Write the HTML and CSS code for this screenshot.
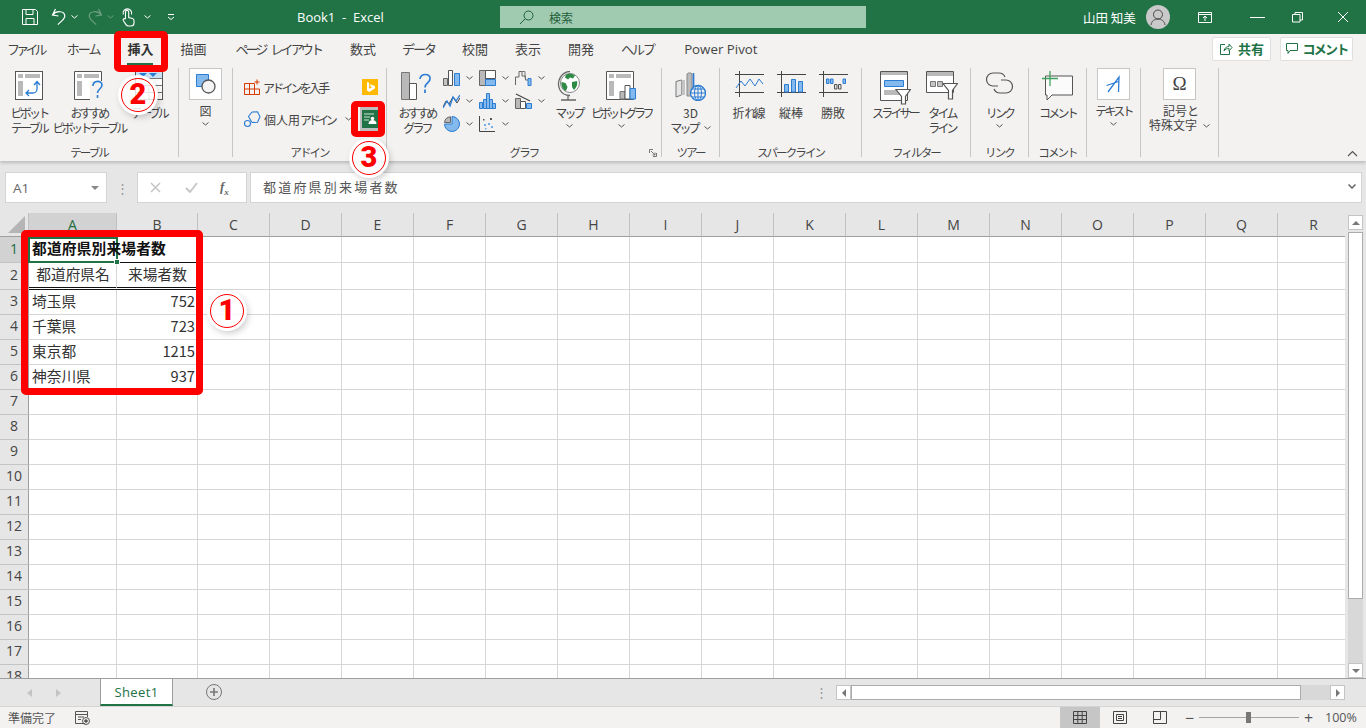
FILE: index.html
```html
<!DOCTYPE html>
<html lang="ja">
<head>
    <meta charset="UTF-8">
    <title>Book1 - Excel</title>
    <link rel="stylesheet" href="styles.css">
</head>
<body>

<!-- title bar -->
<header class="titlebar">
    <div class="qat">
        <svg class="q-save" width="18" height="18" viewBox="0 0 18 18" fill="none" stroke="#fff"><path d="M1.5 1.5h13l2 2v13h-15zM5 1.5v5h7v-5M5 16.5v-6h8v6"/></svg>
        <svg class="q-undo" width="15" height="18" viewBox="0 0 15 18" fill="none" stroke="#fff" stroke-width="1.2"><path d="M4.500 1 1.500 7l6 1M1.800 6.800C5 2.500 13.500 2.500 13.800 8c0 3-3.500 5.500-7 8.500"/></svg>
        <svg class="q-chev" width="7" height="4" viewBox="0 0 7 4" fill="none" stroke="#fff"><path d="m.5.500 3 2.500 3-2.500"/></svg>
        <svg class="q-redo" width="15" height="18" viewBox="0 0 15 18" fill="none" stroke="#6d9f81" stroke-width="1.2"><path d="m10.500 1 3 6-6 1M13.200 6.800C10 2.500 1.500 2.500 1.200 8c0 3 3.500 5.500 7 8.500"/></svg>
        <svg class="q-chev2" width="7" height="4" viewBox="0 0 7 4" fill="none" stroke="#6d9f81"><path d="m.5.500 3 2.500 3-2.500"/></svg>
        <svg class="q-touch" width="14" height="19" viewBox="0 0 14 19" fill="none" stroke="#fff" stroke-width="1.100"><path d="M4.500 11V4a1.600 1.600 0 0 1 3.200 0v5.500l3.800 1a2 2 0 0 1 1.500 2V15a3 3 0 0 1-3 3H7.500a3 3 0 0 1-2.500-1.400L2.300 12.500a1.200 1.200 0 0 1 2.200-1.200M2.300 6.500a4.300 4.300 0 1 1 8.200 0"/></svg>
        <svg class="q-chev3" width="7" height="4" viewBox="0 0 7 4" fill="none" stroke="#fff"><path d="m.5.500 3 2.500 3-2.500"/></svg>
        <svg class="q-more" width="8" height="7" viewBox="0 0 8 7" fill="none" stroke="#fff"><path d="M1 .5h6M1 3l3 2.500L7 3"/></svg>
    </div>
    <div class="doc-title">Book1&nbsp; -&nbsp; Excel</div>
    <div class="search">
        <svg width="15" height="15" viewBox="0 0 15 15" fill="none" stroke="#1e5e3a"><circle cx="9.500" cy="5.500" r="4.500"/><path d="M6.200 8.800 1 14"/></svg>
        <span>検索</span>
    </div>
    <div class="user">山田 知美</div>
    <div class="avatar">
        <svg width="24" height="24" viewBox="0 0 24 24" fill="none" stroke="#4a4a4a"><circle cx="12" cy="9.500" r="4.500"/><path d="M5 20c.5-4 3.500-6 7-6s6.500 2 7 6"/></svg>
    </div>
    <div class="win-btns">
        <svg class="w-display" width="14" height="12" viewBox="0 0 14 12" fill="none" stroke="#fff"><path d="M.5 1.500h13v10H.5zM.5 3.500h13M7 10V5.500M5 7l2-2 2 2"/></svg>
        <svg class="w-min" width="15" height="12" viewBox="0 0 15 12" fill="none" stroke="#fff"><path d="M0 6.500h15"/></svg>
        <svg class="w-restore" width="11" height="12" viewBox="0 0 11 12" fill="none" stroke="#fff"><path d="M.5 3.500h7.500v7.500H.5zM3 3.500V1.500h7.500V9H8"/></svg>
        <svg class="w-close" width="12" height="12" viewBox="0 0 12 12" fill="none" stroke="#fff"><path d="m1 1 10 10M11 1 1 11"/></svg>
    </div>
</header>

<!-- ribbon tabs -->
<nav class="tabs">
    <span class="tab t-file">ファイル</span>
    <span class="tab t-home">ホーム</span>
    <span class="tab active">挿入</span>
    <span class="tab">描画</span>
    <span class="tab t-page">ページ レイアウト</span>
    <span class="tab t-formula">数式</span>
    <span class="tab t-data">データ</span>
    <span class="tab">校閲</span>
    <span class="tab">表示</span>
    <span class="tab">開発</span>
    <span class="tab t-help">ヘルプ</span>
    <span class="tab t-power">Power Pivot</span>
    <div class="share">
        <button class="sbtn btn-share">
            <svg width="14" height="14" viewBox="0 0 14 14" fill="none" stroke="#217346"><path d="M6 2.500H1.500v10h9V9M5 9c.5-3 2.500-4.500 5-4.500V2l3 3.500L10 9V6.500C8 6.500 6 7 5 9z"/></svg>
            共有
        </button>
        <button class="sbtn btn-comment">
            <svg width="12" height="13" viewBox="0 0 12 13" fill="none" stroke="#217346"><path d="M.5 1.500h11v7H4l-2 3v-3H.5z"/></svg>
            <span class="k2">コメント</span>
        </button>
    </div>
</nav>

<!-- ribbon -->
<section class="ribbon">
    <div class="grp g-table">
        <div class="body">
            <div class="big w58">
                <div class="ico">
                    <svg width="28" height="29" viewBox="0 0 28 29" fill="none"><rect x=".5" y=".5" width="27" height="28" fill="#fff" stroke="#555"/><path fill="#b9b9b9" d="M3 3h5v4H3zM10 3h15v4H10zM3 10h5v15H3z"/><path stroke="#2b7cd3" stroke-width="1.300" d="M11 22h7a4 4 0 0 0 4-4v-7M19 14l3-3.500 3 3.500M14 19l-3 3 3 3"/></svg>
                </div>
                <div class="lbl k">ピボット</div>
                <div class="lbl k">テーブル</div>
            </div>
            <div class="big w62">
                <div class="ico">
                    <svg width="31" height="30" viewBox="0 0 31 30" fill="none"><path fill="#fff" stroke="#555" d="M.5.5h27v28H.5z"/><path fill="#b9b9b9" d="M3 3h5v4H3zM10 3h15v4H10zM3 10h5v15H3z"/><path fill="#f3f2f1" d="M16 10h15v20H16z"/><path stroke="#2b7cd3" stroke-width="1.600" d="M19 15c0-6 9-6 9-1 0 4-4.500 4-4.500 8M23.500 24v3"/></svg>
                </div>
                <div class="lbl k">おすすめ</div>
                <div class="lbl k">ピボットテーブル</div>
            </div>
            <div class="big w58">
                <div class="ico">
                    <svg width="28" height="29" viewBox="0 0 28 29" fill="none"><rect x=".5" y=".5" width="27" height="28" fill="#fff" stroke="#555"/><path fill="#c9e1f5" d="M1 1h26v6H1z"/><path fill="#2b7cd3" d="m4 2 4 4 4-4zM14 2l4 4 4-4z"/><path stroke="#777" d="M1 7.500h26M1 14.500h26M1 21.500h26M14 7v21"/></svg>
                </div>
                <div class="lbl k">テーブル</div>
            </div>
        </div>
        <div class="glabel k">テーブル</div>
    </div>

    <div class="grp g-fig">
        <div class="body">
            <div class="big wfull boxed">
                <div class="box">
                    <svg width="22" height="22" viewBox="0 0 22 22" fill="none"><path fill="#83b9ec" stroke="#2b7cd3" d="M1.500 1.500h12v12h-12z"/><circle cx="13.500" cy="13.500" r="6.500" fill="#f4f4f4" stroke="#555" stroke-width="1.300"/></svg>
                </div>
                <div class="lbl">図</div>
                <svg class="chev" width="7" height="4" viewBox="0 0 7 4"><path fill="none" stroke="#555" d="m.5.500 3 2.500 3-2.500"/></svg>
            </div>
        </div>
        <div class="glabel"></div>
    </div>

    <div class="grp g-addin">
        <div class="body">
            <div class="addin-rows">
                <div class="addin-row">
                    <svg width="16" height="16" viewBox="0 0 16 16" fill="none" stroke="#d83b01"><path d="M.5 4.500h10v11H.5zM.5 10h10M5.500 4.500v11M10.500 10h5v5.500h-5M13 .5v5M10.500 3h5"/></svg>
                    <span class="lbl k">アドインを入手</span>
                </div>
                <div class="addin-row">
                    <svg width="17" height="17" viewBox="0 0 17 17" fill="none" stroke="#2b7cd3" stroke-width="1.100"><path d="m8 1 5.500-.2 2.500 5-2.500 5.500-5.500.2"/><path d="M8 1 4.500 5.500l3.500 6"/><circle cx="3.500" cy="12.500" r="3" fill="#f3f2f1"/></svg>
                    <span class="lbl"><span class="kj">個人用</span><span class="k tight">アドイン</span></span>
                    <svg class="addin-chev" width="7" height="4" viewBox="0 0 7 4"><path fill="none" stroke="#555" d="m.5.500 3 2.500 3-2.500"/></svg>
                </div>
            </div>
            <div class="addin-side">
                <svg width="16" height="16" viewBox="0 0 16 16"><path fill="#ffb900" d="M0 0h16v16H0z"/><path fill="#fff" d="m5 3 2.200.800v6l3-1.500-1.500-.8-.8-2.200 5 1.800v2.500L7.200 13 5 11.500z"/></svg>
                <svg width="20" height="24" viewBox="0 0 20 24"><path fill="#bdbdbd" d="M0 0h20v24H0z"/><path fill="#217346" d="M2 3h16v18H2z"/><path stroke="#cfe6d9" fill="none" d="M4 7h10M4 10h6M4 13h5"/><circle cx="12.500" cy="11.500" r="1.800" fill="#fff"/><path fill="#fff" d="M8.500 17c0-3 2-4 4-4s4 1 4 4z"/></svg>
            </div>
        </div>
        <div class="glabel k">アドイン</div>
    </div>

    <div class="grp g-chart">
        <div class="body">
            <div class="big w52">
                <div class="ico">
                    <svg width="32" height="30" viewBox="0 0 32 30" fill="none"><path fill="#b9b9b9" stroke="#777" d="M.5 1.500h8v27h-8z"/><path fill="#fff" stroke="#555" d="M8.500 12.500h7v16h-7z"/><path stroke="#2b7cd3" stroke-width="1.700" d="M19 8c0-6 11-6 10 0 0 4-5 4-5 8.500M24 18.500V22"/></svg>
                </div>
                <div class="lbl k">おすすめ</div>
                <div class="lbl k">グラフ</div>
            </div>
            <div class="mini-grid">
                <div class="mini">
                    <svg width="17" height="16" viewBox="0 0 17 16" fill="none"><path fill="#c4c4c4" stroke="#666" d="M.5 8.500h4v7h-4z"/><path fill="#fff" stroke="#555" d="M5.500.5h4v15h-4z"/><path fill="#83b9ec" stroke="#2b7cd3" d="M11.500 3.500h5v12h-5z"/></svg>
                    <svg class="chev" width="7" height="4" viewBox="0 0 7 4"><path fill="none" stroke="#555" d="m.5.500 3 2.500 3-2.500"/></svg>
                </div>
                <div class="mini">
                    <svg width="17" height="16" viewBox="0 0 17 16" fill="none"><path fill="#b9b9b9" stroke="#666" d="M.5.500h6v15h-6z"/><path fill="#fff" stroke="#555" d="M6.500.5h10v8h-10z"/><path fill="#83b9ec" stroke="#2b7cd3" d="M6.500 9.500h10v6h-10z"/></svg>
                    <svg class="chev" width="7" height="4" viewBox="0 0 7 4"><path fill="none" stroke="#555" d="m.5.500 3 2.500 3-2.500"/></svg>
                </div>
                <div class="mini">
                    <svg width="17" height="16" viewBox="0 0 17 16" fill="none" stroke="#666"><path d="M.5 15V7h3.500V1.500h3V6h3.500v4h2.500"/><path stroke="#777" d="M7 1.500h3V8"/><path fill="#83b9ec" stroke="#2b7cd3" d="M13 8.500h3v7h-3z"/></svg>
                    <svg class="chev" width="7" height="4" viewBox="0 0 7 4"><path fill="none" stroke="#555" d="m.5.500 3 2.500 3-2.500"/></svg>
                </div>
                <div class="mini">
                    <svg width="17" height="16" viewBox="0 0 17 16" fill="none"><path stroke="#444" d="m0 14 3-6 3 3 4-7 4 6 3-5"/><path stroke="#2b7cd3" stroke-width="1.300" d="m0 15 4-7 3 5 3-9 3 4 4-6"/></svg>
                    <svg class="chev" width="7" height="4" viewBox="0 0 7 4"><path fill="none" stroke="#555" d="m.5.500 3 2.500 3-2.500"/></svg>
                </div>
                <div class="mini">
                    <svg width="17" height="16" viewBox="0 0 17 16" fill="#83b9ec" stroke="#2b7cd3"><path d="M.5 9.500h3v6h-3zM4.500 6.500h3v9h-3zM7.500.5h3v15h-3zM10.500 6.500h3v9h-3zM13.500 10.500h3v5h-3z"/></svg>
                    <svg class="chev" width="7" height="4" viewBox="0 0 7 4"><path fill="none" stroke="#555" d="m.5.500 3 2.500 3-2.500"/></svg>
                </div>
                <div class="mini">
                    <svg width="17" height="16" viewBox="0 0 17 16" fill="none"><path fill="#b9b9b9" stroke="#666" d="M.5 5.500h5v10h-5z"/><path fill="#fff" stroke="#555" d="M5.500 8.500h5v7h-5z"/><path fill="#83b9ec" stroke="#2b7cd3" d="M11.500 10.500h5v5h-5z"/><path stroke="#444" stroke-width="1.200" d="m1 1 14 7"/></svg>
                    <svg class="chev" width="7" height="4" viewBox="0 0 7 4"><path fill="none" stroke="#555" d="m.5.500 3 2.500 3-2.500"/></svg>
                </div>
                <div class="mini">
                    <svg width="17" height="16" viewBox="0 0 17 16"><path fill="#83b9ec" stroke="#2b7cd3" d="M9 .5a7.500 7.500 0 1 1-7.500 7.500H9z"/><path fill="#b9b9b9" stroke="#666" d="M7.500.8V6.500H1.500A6.500 6.500 0 0 1 7.500.8z"/></svg>
                    <svg class="chev" width="7" height="4" viewBox="0 0 7 4"><path fill="none" stroke="#555" d="m.5.500 3 2.500 3-2.500"/></svg>
                </div>
                <div class="mini">
                    <svg width="17" height="16" viewBox="0 0 17 16"><path fill="none" stroke="#444" d="M.5 0v15.500H16"/><path fill="#555" d="M11 2h2v2h-2zM4 3h1.500v1.500H4z"/><path fill="#6fb0e8" d="M5 8h2v2H5zM9 7h2v2H9zM12 10h2v2h-2zM6 12h1.500v1.500H6z"/></svg>
                    <svg class="chev" width="7" height="4" viewBox="0 0 7 4"><path fill="none" stroke="#555" d="m.5.500 3 2.500 3-2.500"/></svg>
                </div>
            </div>
            <div class="big w36">
                <div class="ico">
                    <svg width="24" height="30" viewBox="0 0 24 30" fill="none"><circle cx="13" cy="12" r="9.500" fill="#fff" stroke="#888"/><path fill="#2e8b46" d="M9 3.500c3-1.500 7-1 9 1l-2 3-3-1-2 2-3-2zM4.500 11l4 1 2 4-1.500 4c-3-1-5-5-4.500-9zM15 11l5-1c1 4-1 7-3 9l-2-3z"/><path stroke="#666" stroke-width="1.300" d="M13 .5C5 .5-1.500 10 3 19c2 3.500 6 5.500 10 5.500M11 24.500v4M4 29h15"/></svg>
                </div>
                <div class="lbl k">マップ</div>
                <svg class="chev" width="7" height="4" viewBox="0 0 7 4"><path fill="none" stroke="#555" d="m.5.500 3 2.500 3-2.500"/></svg>
            </div>
            <div class="big w68">
                <div class="ico">
                    <svg width="30" height="29" viewBox="0 0 30 29" fill="none"><path fill="#fff" stroke="#555" d="M.5.5h27v28H.5z"/><path fill="#b9b9b9" d="M3 3h5v4H3zM10 3h15v4H10zM3 10h5v15H3z"/><path fill="#b9b9b9" stroke="#777" d="M14 20.500h5V28h-5z"/><path fill="#fff" stroke="#555" d="M19 14.500h5V28h-5z"/><path fill="#83b9ec" stroke="#2b7cd3" d="M24 17.500h5.500V28H24z"/></svg>
                </div>
                <div class="lbl k tight">ピボットグラフ</div>
                <svg class="chev" width="7" height="4" viewBox="0 0 7 4"><path fill="none" stroke="#555" d="m.5.500 3 2.500 3-2.500"/></svg>
            </div>
        </div>
        <div class="glabel k">グラフ</div>
        <svg class="launcher" width="8" height="8" viewBox="0 0 8 8" fill="none" stroke="#777"><path d="M.5 4V.5H4M7.500 4v3.500H4M2 2l4 4M6 3.500V6H3.500"/></svg>
    </div>

    <div class="grp g-tour">
        <div class="body">
            <div class="big wfull">
                <div class="ico">
                    <svg width="31" height="30" viewBox="0 0 31 30" fill="none"><path fill="#e6e6e6" stroke="#777" d="M1 10.500 6.500 9v15L1 26z"/><path fill="#c4c4c4" d="M6.500 9H10v15H6.500z"/><path fill="#bbb" stroke="#888" d="M12 3c1-1.500 4-1.500 5 0v22h-5z"/><path stroke="#2b7cd3" stroke-width="1.700" d="M18.500 2v16"/><circle cx="23" cy="22" r="7.500" fill="#f3f2f1" stroke="#2b7cd3" stroke-width="1.300"/><path stroke="#2b7cd3" d="M23 14.500v15M15.500 22h15M17 18h12M17 26h12"/><ellipse cx="23" cy="22" rx="3.500" ry="7.500" stroke="#2b7cd3"/></svg>
                </div>
                <div class="lbl">3D</div>
                <div class="lbl row-chev"><span class="k">マップ</span><svg class="chev" width="7" height="4" viewBox="0 0 7 4"><path fill="none" stroke="#555" d="m.5.500 3 2.500 3-2.500"/></svg></div>
            </div>
        </div>
        <div class="glabel k">ツアー</div>
    </div>

    <div class="grp g-spark">
        <div class="body">
            <div class="big w42">
                <div class="ico">
                    <svg width="29" height="26" viewBox="0 0 29 26" fill="none"><path stroke="#444" d="M0 3.500h29M0 21.500h29M4.500 0v26"/><path stroke="#2b7cd3" d="m1 17 5-7 4 5 5-7 5 7 4-7 4 5"/></svg>
                </div>
                <div class="lbl"><span class="kj">折</span><span class="k">れ</span><span class="kj">線</span></div>
            </div>
            <div class="big w42">
                <div class="ico">
                    <svg width="29" height="26" viewBox="0 0 29 26" fill="none"><path stroke="#444" d="M0 3.500h29M0 21.500h29M4.500 0v26"/><path fill="#83b9ec" stroke="#2b7cd3" d="M7.500 13.500h4V21h-4zM14.500 8.500h4V21h-4zM21.500 10.500h4V21h-4z"/></svg>
                </div>
                <div class="lbl">縦棒</div>
            </div>
            <div class="big w42">
                <div class="ico">
                    <svg width="29" height="26" viewBox="0 0 29 26" fill="none"><path stroke="#444" d="M0 3.500h29M0 21.500h29M4.500 0v26"/><path fill="#83b9ec" stroke="#2b7cd3" d="M7.500 8h2.500v4.500H7.500zM11.500 8H14v4.500h-2.500zM24 8h2.500v4.500H24z"/><path fill="#e6e6e6" stroke="#555" d="M15.500 13.500H18V18h-2.500zM19.500 13.500H22V18h-2.500z"/></svg>
                </div>
                <div class="lbl">勝敗</div>
            </div>
        </div>
        <div class="glabel k">スパークライン</div>
    </div>

    <div class="grp g-filter">
        <div class="body">
            <div class="big w50">
                <div class="ico">
                    <svg width="31" height="34" viewBox="0 0 31 34" fill="none"><path fill="#fff" stroke="#555" d="M.5.5h27v29H.5z"/><path fill="#b9b9b9" d="M1 1h26v3H1zM4 19h19v5H4z"/><path fill="#83b9ec" stroke="#2b7cd3" d="M4.500 9.500h19v6h-19z"/><path fill="#fff" stroke="#555" stroke-width="1.200" d="M16 18.500h14.500l-5 7V33h-4v-7.500z"/></svg>
                </div>
                <div class="lbl k">スライサー</div>
            </div>
            <div class="big w44">
                <div class="ico">
                    <svg width="32" height="30" viewBox="0 0 32 30" fill="none"><path fill="#fff" stroke="#555" d="M.5.5h27v21H.5z"/><path fill="#b9b9b9" d="M1 1h26v4H1z"/><path fill="#c4c4c4" stroke="#777" d="M4.500 10.500h5v5h-5zM11.500 10.500h5v5h-5z"/><path fill="#fff" stroke="#555" stroke-width="1.200" d="M17 12.500h14.500l-5 7V28h-4v-8.500z"/></svg>
                </div>
                <div class="lbl k">タイム</div>
                <div class="lbl k">ライン</div>
            </div>
        </div>
        <div class="glabel k">フィルター</div>
    </div>

    <div class="grp g-link">
        <div class="body">
            <div class="big wfull">
                <div class="ico">
                    <svg width="29" height="24" viewBox="0 0 29 24" fill="none" stroke="#555" stroke-width="1.200"><path d="M13 15H8a6.500 6.500 0 1 1 0-13h6a6.500 6.500 0 0 1 6 4"/><path d="M16 9h5a6.500 6.500 0 1 1 0 13h-6a6.500 6.500 0 0 1-6-4"/></svg>
                </div>
                <div class="lbl k">リンク</div>
                <svg class="chev" width="7" height="4" viewBox="0 0 7 4"><path fill="none" stroke="#555" d="m.5.500 3 2.500 3-2.500"/></svg>
            </div>
        </div>
        <div class="glabel k">リンク</div>
    </div>

    <div class="grp g-comment">
        <div class="body">
            <div class="big wfull">
                <div class="ico">
                    <svg width="31" height="30" viewBox="0 0 31 30" fill="none"><path fill="#fbfbfb" stroke="#555" d="M3.500 5h27v19H10l-5 5v-5H3.500z"/><path stroke="#3fa35f" stroke-width="1.300" d="M8 0v15M0 7.500h16"/></svg>
                </div>
                <div class="lbl k">コメント</div>
            </div>
        </div>
        <div class="glabel k">コメント</div>
    </div>

    <div class="grp g-text">
        <div class="body">
            <div class="big wfull boxed">
                <div class="box">
                    <svg width="20" height="20" viewBox="0 0 20 20" fill="none" stroke="#2b7cd3" stroke-width="1.300"><path d="M4 18 15 3l-.5 15M2.500 11.500l12-4"/></svg>
                </div>
                <div class="lbl k">テキスト</div>
                <svg class="chev" width="7" height="4" viewBox="0 0 7 4"><path fill="none" stroke="#555" d="m.5.500 3 2.500 3-2.500"/></svg>
            </div>
        </div>
        <div class="glabel"></div>
    </div>

    <div class="grp g-symbol">
        <div class="body">
            <div class="big wfull boxed">
                <div class="box omega">Ω</div>
                <div class="lbl"><span class="kj">記号</span><span class="k">と</span></div>
                <div class="lbl row-chev"><span class="kj">特殊文字</span><svg class="chev" width="7" height="4" viewBox="0 0 7 4"><path fill="none" stroke="#555" d="m.5.500 3 2.500 3-2.500"/></svg></div>
            </div>
        </div>
        <div class="glabel"></div>
    </div>

    <svg class="collapse" width="11" height="7" viewBox="0 0 11 7"><path fill="none" stroke="#555" stroke-width="1.200" d="m1 6 4.500-4.500L10 6"/></svg>
</section>

<!-- formula bar -->
<div class="formula">
    <div class="namebox">
        <span>A1</span>
        <svg width="8" height="4" viewBox="0 0 8 4"><path fill="#888" d="M0 0h8L4 4z"/></svg>
    </div>
    <div class="grip">⋮</div>
    <div class="fx-box">
        <svg width="11" height="11" viewBox="0 0 11 11" fill="none" stroke="#c4c4c4" stroke-width="1.500"><path d="m1 1 9 9M10 1l-9 9"/></svg>
        <svg width="13" height="11" viewBox="0 0 13 11" fill="none" stroke="#c4c4c4" stroke-width="1.800"><path d="m1 6 4 4 7-9"/></svg>
        <span class="fx">f<sub>x</sub></span>
    </div>
    <div class="fx-input">
        <span>都道府県別来場者数</span>
        <svg width="8" height="5" viewBox="0 0 8 5" fill="none" stroke="#666" stroke-width="1.500"><path d="m.5.500 3.500 3.500 3.500-3.500"/></svg>
    </div>
</div>

<!-- sheet -->
<main class="sheet">
    <div class="grid-wrap">
        <table class="grid">
            <colgroup>
                <col class="c-row"><col class="c-a"><col class="c-b"><col span="16" class="c-std">
            </colgroup>
            <tr class="r-head">
                <th class="corner"><svg width="17" height="17" viewBox="0 0 17 17"><path fill="#b5b5b5" d="M17 0v17H0z"/></svg></th>
                <th class="sel">A</th><th>B</th><th>C</th><th>D</th><th>E</th><th>F</th><th>G</th><th>H</th><th>I</th><th>J</th><th>K</th><th>L</th><th>M</th><th>N</th><th>O</th><th>P</th><th>Q</th><th>R</th>
            </tr>
            <tr class="r-1">
                <th class="sel">1</th>
                <td class="title"><span class="title-text">都道府県別来場者数</span><div class="cursor"><i></i></div></td>
                <td class="under"></td><td></td><td></td><td></td><td></td><td></td><td></td><td></td><td></td><td></td><td></td><td></td><td></td><td></td><td></td><td></td><td></td>
            </tr>
            <tr class="r-2">
                <th>2</th>
                <td class="dbl ctr">都道府県名</td><td class="dbl ctr">来場者数</td><td></td><td></td><td></td><td></td><td></td><td></td><td></td><td></td><td></td><td></td><td></td><td></td><td></td><td></td><td></td><td></td>
            </tr>
            <tr>
                <th>3</th>
                <td>埼玉県</td><td class="num">752</td><td></td><td></td><td></td><td></td><td></td><td></td><td></td><td></td><td></td><td></td><td></td><td></td><td></td><td></td><td></td><td></td>
            </tr>
            <tr>
                <th>4</th>
                <td>千葉県</td><td class="num">723</td><td></td><td></td><td></td><td></td><td></td><td></td><td></td><td></td><td></td><td></td><td></td><td></td><td></td><td></td><td></td><td></td>
            </tr>
            <tr>
                <th>5</th>
                <td>東京都</td><td class="num">1215</td><td></td><td></td><td></td><td></td><td></td><td></td><td></td><td></td><td></td><td></td><td></td><td></td><td></td><td></td><td></td><td></td>
            </tr>
            <tr>
                <th>6</th>
                <td>神奈川県</td><td class="num">937</td><td></td><td></td><td></td><td></td><td></td><td></td><td></td><td></td><td></td><td></td><td></td><td></td><td></td><td></td><td></td><td></td>
            </tr>
            <tr><th>7</th><td></td><td></td><td></td><td></td><td></td><td></td><td></td><td></td><td></td><td></td><td></td><td></td><td></td><td></td><td></td><td></td><td></td><td></td></tr>
            <tr><th>8</th><td></td><td></td><td></td><td></td><td></td><td></td><td></td><td></td><td></td><td></td><td></td><td></td><td></td><td></td><td></td><td></td><td></td><td></td></tr>
            <tr><th>9</th><td></td><td></td><td></td><td></td><td></td><td></td><td></td><td></td><td></td><td></td><td></td><td></td><td></td><td></td><td></td><td></td><td></td><td></td></tr>
            <tr><th>10</th><td></td><td></td><td></td><td></td><td></td><td></td><td></td><td></td><td></td><td></td><td></td><td></td><td></td><td></td><td></td><td></td><td></td><td></td></tr>
            <tr><th>11</th><td></td><td></td><td></td><td></td><td></td><td></td><td></td><td></td><td></td><td></td><td></td><td></td><td></td><td></td><td></td><td></td><td></td><td></td></tr>
            <tr><th>12</th><td></td><td></td><td></td><td></td><td></td><td></td><td></td><td></td><td></td><td></td><td></td><td></td><td></td><td></td><td></td><td></td><td></td><td></td></tr>
            <tr><th>13</th><td></td><td></td><td></td><td></td><td></td><td></td><td></td><td></td><td></td><td></td><td></td><td></td><td></td><td></td><td></td><td></td><td></td><td></td></tr>
            <tr><th>14</th><td></td><td></td><td></td><td></td><td></td><td></td><td></td><td></td><td></td><td></td><td></td><td></td><td></td><td></td><td></td><td></td><td></td><td></td></tr>
            <tr><th>15</th><td></td><td></td><td></td><td></td><td></td><td></td><td></td><td></td><td></td><td></td><td></td><td></td><td></td><td></td><td></td><td></td><td></td><td></td></tr>
            <tr><th>16</th><td></td><td></td><td></td><td></td><td></td><td></td><td></td><td></td><td></td><td></td><td></td><td></td><td></td><td></td><td></td><td></td><td></td><td></td></tr>
            <tr><th>17</th><td></td><td></td><td></td><td></td><td></td><td></td><td></td><td></td><td></td><td></td><td></td><td></td><td></td><td></td><td></td><td></td><td></td><td></td></tr>
            <tr><th>18</th><td></td><td></td><td></td><td></td><td></td><td></td><td></td><td></td><td></td><td></td><td></td><td></td><td></td><td></td><td></td><td></td><td></td><td></td></tr>
        </table>
    </div>
    <div class="vscroll">
        <div class="sb-btn"><svg width="8" height="4" viewBox="0 0 8 4"><path fill="#777" d="M4 0l4 4H0z"/></svg></div>
        <div class="v-thumb"></div>
        <div class="v-track"></div>
        <div class="sb-btn"><svg width="8" height="4" viewBox="0 0 8 4"><path fill="#777" d="M0 0h8L4 4z"/></svg></div>
    </div>
</main>

<!-- sheet tabs -->
<div class="sheetbar">
    <div class="nav-arrows">
        <svg width="5" height="8" viewBox="0 0 5 8"><path fill="#c4c4c4" d="M5 0v8L0 4z"/></svg>
        <svg width="5" height="8" viewBox="0 0 5 8"><path fill="#c4c4c4" d="M0 0v8l5-4z"/></svg>
    </div>
    <div class="sheet-tab">Sheet1</div>
    <svg class="add-sheet" width="16" height="16" viewBox="0 0 16 16" fill="none" stroke="#777"><circle cx="8" cy="8" r="7.500"/><path stroke-width="1.600" d="M8 4v8M4 8h8"/></svg>
    <div class="grip grip-h">⋮</div>
    <div class="hscroll">
        <div class="sb-btn"><svg width="4" height="8" viewBox="0 0 4 8"><path fill="#777" d="M4 0v8L0 4z"/></svg></div>
        <div class="h-thumb"></div>
        <div class="h-track"></div>
        <div class="sb-btn"><svg width="4" height="8" viewBox="0 0 4 8"><path fill="#777" d="M0 0v8l4-4z"/></svg></div>
    </div>
</div>

<!-- status bar -->
<footer class="statusbar">
    <span class="ready">準備完了</span>
    <svg width="15" height="14" viewBox="0 0 15 14" fill="none" stroke="#555"><path d="M10 12.500H.5V.5h12V6M.5 3.500h12M3 6h6M3 8.500h3"/><circle cx="11" cy="10" r="3.500"/><circle cx="11" cy="10" r="1.300" fill="#555"/></svg>
    <div class="views">
        <div class="view on"><svg width="14" height="13" viewBox="0 0 14 13" fill="none" stroke="#444"><path d="M.5.500h13v12H.5zM.5 4.500h13M.5 8.500h13M4.800.5v12M9.200.5v12"/></svg></div>
        <div class="view"><svg width="14" height="13" viewBox="0 0 14 13" fill="none" stroke="#444"><path d="M.5.500h13v12H.5zM3.500 3.500h7v6h-7zM5 5.500h4M5 7.500h4"/></svg></div>
        <div class="view"><svg width="14" height="13" viewBox="0 0 14 13" fill="none" stroke="#444"><path d="M.5.500h13v12H.5zM.5 8.500h7V.5"/></svg></div>
    </div>
    <div class="zoom">
        <span class="z-btn">−</span>
        <div class="z-track"><div class="z-thumb"></div></div>
        <span class="z-btn">+</span>
        <span class="z-val">100%</span>
    </div>
</footer>

<!-- annotations over the screenshot -->
<div class="redbox box-tab"></div>
<div class="redbox box-cmd"></div>
<div class="redbox box-range"></div>
<div class="mark m-1">1</div>
<div class="mark m-2">2</div>
<div class="mark m-3">3</div>

</body>
</html>
```

FILE: styles.css
```css
* {
    box-sizing: border-box;
    margin: 0;
    padding: 0;
}

html, body {
    width: 1366px;
    height: 728px;
    overflow: hidden;
}

body {
    position: relative;
    display: flex;
    flex-direction: column;
    background: #e6e6e6;
    font-family: "Noto Sans CJK JP", sans-serif;
    color: #444;
}

svg {
    display: block;
    flex-shrink: 0;
}

/* title bar */
.titlebar {
    height: 34px;
    background: #217346;
    color: #fff;
    display: flex;
    align-items: center;
    flex-shrink: 0;
}

.qat {
    width: 297px;
    padding-left: 21px;
    display: flex;
    align-items: center;
    flex-shrink: 0;
}

.q-undo { margin-left: 12px; }
.q-chev { margin-left: 5px; }
.q-redo { margin-left: 10px; }
.q-chev2 { margin-left: 4px; }
.q-touch { margin-left: 7px; }
.q-chev3 { margin-left: 9px; }
.q-more { margin-left: 16px; }

.doc-title {
    width: 203px;
    font-family: "Open Sans", sans-serif;
    font-size: 13px;
    white-space: nowrap;
}

.search {
    width: 366px;
    height: 22px;
    background: #a0cbb1;
    display: flex;
    align-items: center;
    padding-left: 19px;
    gap: 15px;
    font-size: 12px;
    color: #1e5e3a;
    letter-spacing: 0;
}

.user {
    margin-left: 217px;
    width: 63px;
    font-size: 12.5px;
    white-space: nowrap;
}

.avatar {
    width: 24px;
    height: 24px;
    border-radius: 50%;
    background: #c9c9c9;
    overflow: hidden;
}

.win-btns {
    display: flex;
    align-items: center;
    margin-left: 28px;
}

.w-min { margin-left: 38px; }
.w-restore { margin-left: 27px; }
.w-close { margin-left: 34px; }

/* ribbon tabs */
.tabs {
    height: 33px;
    background: #f3f2f1;
    display: flex;
    align-items: center;
    gap: 27px;
    padding-left: 7px;
    font-size: 13px;
    flex-shrink: 0;
    position: relative;
    white-space: nowrap;
}

.tab {
    line-height: 24px;
    height: 28px;
    color: #444;
}

.t-file { letter-spacing: -3.8px; }
.t-home { letter-spacing: -2px; margin-left: -4px; }
.t-page { letter-spacing: -2.9px; margin-left: 2px; word-spacing: 5px; }
.t-formula { margin-left: 2px; }
.t-data { letter-spacing: -2px; margin-left: -1px; }
.t-help { letter-spacing: -2px; }

.t-power {
    font-family: "Open Sans", sans-serif;
    font-size: 13.3px;
    margin-left: 3px;
}

.tab.active {
    font-weight: 700;
    color: #333;
    margin-left: 1px;
    border-bottom: 2px solid #217346;
}

.share {
    margin-left: auto;
    margin-right: 13px;
    margin-top: -4px;
    display: flex;
    gap: 9px;
}

.sbtn {
    height: 24px;
    background: #fff;
    border: 1px solid #e1dfdd;
    border-radius: 2px;
    display: flex;
    align-items: center;
    justify-content: center;
    gap: 5px;
    color: #217346;
    font-family: inherit;
    font-size: 13px;
    font-weight: 700;
}

.btn-share { width: 59px; }
.btn-comment { width: 73px; }
.k2 { letter-spacing: -1.8px; }

/* ribbon */
.ribbon {
    height: 94px;
    background: #f3f2f1;
    display: flex;
    align-items: flex-start;
    padding-top: 1px;
    position: relative;
    box-shadow: 0 2px 3px rgba(0, 0, 0, .18);
    flex-shrink: 0;
    z-index: 1;
    font-size: 12px;
}

.grp {
    height: 89px;
    border-right: 1px solid #c8c6c4;
    display: flex;
    flex-direction: column;
    position: relative;
    flex-shrink: 0;
}

.g-table { width: 179px; }
.g-fig { width: 54px; }
.g-addin { width: 154px; }
.g-chart { width: 275px; }
.g-tour { width: 58px; }
.g-spark { width: 142px; }
.g-filter { width: 109px; }
.g-link { width: 58px; }
.g-comment { width: 58px; }
.g-text { width: 54px; }
.g-symbol { width: 78px; }

.body {
    flex: 1;
    display: flex;
    min-height: 0;
}

.g-chart .body { padding-left: 4px; }
.g-spark .body { padding-left: 8px; }
.g-filter .body { padding-left: 8px; }

.glabel {
    height: 14px;
    margin-bottom: -2px;
    line-height: 14px;
    text-align: center;
    font-size: 11.5px;
    white-space: nowrap;
}

.glabel.k { letter-spacing: -1.9px; }

.big {
    display: flex;
    flex-direction: column;
    align-items: center;
    flex-shrink: 0;
    white-space: nowrap;
}

.w36 { width: 36px; }
.w42 { width: 42px; }
.w44 { width: 44px; }
.w50 { width: 50px; }
.w52 { width: 52px; }
.w58 { width: 58px; }
.w62 { width: 62px; }
.w68 { width: 68px; }
.wfull { width: 100%; }

.ico {
    height: 37px;
    padding-top: 3px;
    display: flex;
    justify-content: center;
}

.lbl {
    line-height: 15px;
    font-size: 12px;
    white-space: nowrap;
}

.lbl.k, span.k {
    letter-spacing: -2.8px;
}

.lbl.k.tight, span.k.tight {
    letter-spacing: -3.4px;
}

.kj { letter-spacing: 0; }

.chev { margin-top: 4px; }

.row-chev {
    display: flex;
    align-items: center;
    gap: 6px;
}

.row-chev .chev { margin-top: 1px; }

.boxed .lbl { margin-top: 4px; line-height: 14px; }
.boxed .lbl + .lbl { margin-top: 0; }
.boxed > .chev { margin-top: 4px; }

.box {
    width: 33px;
    height: 32px;
    background: #fff;
    border: 1px solid #c8c6c4;
    display: flex;
    align-items: center;
    justify-content: center;
}

.omega {
    font-family: "Liberation Serif", serif;
    font-size: 19px;
    color: #444;
}

/* add-ins */
.addin-rows {
    width: 127px;
    padding: 9px 0 0 11px;
    display: flex;
    flex-direction: column;
    gap: 12px;
}

.addin-row {
    height: 20px;
    display: flex;
    align-items: center;
    gap: 2px;
}

.addin-row svg { margin-right: 1px; }

.addin-row .addin-chev { margin-left: 9px; }

.addin-side {
    padding-top: 11px;
    display: flex;
    flex-direction: column;
    align-items: center;
    gap: 12px;
    width: 20px;
}

/* chart minis */
.mini-grid {
    width: 108px;
    padding-top: 2px;
    display: grid;
    grid-template-columns: repeat(3, 36px);
    grid-auto-rows: 23px;
    align-items: start;
    flex-shrink: 0;
}

.mini {
    height: 16px;
    display: flex;
    align-items: center;
    gap: 6px;
}

.mini .chev { margin-top: 0; }

.launcher {
    position: absolute;
    right: 4px;
    bottom: 0;
}

.collapse {
    position: absolute;
    right: 8px;
    bottom: 4px;
}

/* formula bar */
.formula {
    height: 52px;
    padding: 11px 4px 0 5px;
    display: flex;
    align-items: flex-start;
    flex-shrink: 0;
}

.namebox {
    width: 102px;
    height: 31px;
    background: #fff;
    border: 1px solid #d4d4d4;
    display: flex;
    align-items: center;
    justify-content: space-between;
    padding: 0 7px;
    font-family: "Open Sans", sans-serif;
    font-size: 13.5px;
    color: #666;
}

.grip {
    width: 30px;
    line-height: 31px;
    text-align: center;
    color: #999;
    font-size: 13px;
}

.fx-box {
    width: 110px;
    height: 31px;
    background: #fff;
    border: 1px solid #d4d4d4;
    display: flex;
    align-items: center;
    padding-left: 12px;
    gap: 24px;
}

.fx {
    font-family: "Liberation Serif", serif;
    font-style: italic;
    font-weight: 700;
    font-size: 13px;
    color: #666;
    margin-left: -2px;
}

.fx sub { font-size: 9px; }

.fx-input {
    margin-left: 3px;
    flex: 1;
    height: 31px;
    background: #fff;
    border: 1px solid #d4d4d4;
    display: flex;
    align-items: center;
    justify-content: space-between;
    padding: 0 5px 2px 12px;
    font-size: 13px;
    letter-spacing: 2.2px;
    color: #555;
}

/* sheet */
.sheet {
    height: 465px;
    display: flex;
    flex-shrink: 0;
}

.grid-wrap {
    width: 1345px;
    height: 465px;
    overflow: hidden;
    flex-shrink: 0;
}

.grid {
    table-layout: fixed;
    width: 1350px;
    border-collapse: separate;
    border-spacing: 0;
    background: #fff;
    font-size: 14.7px;
    color: #333;
}

.c-row { width: 29px; }
.c-a { width: 88px; }
.c-b { width: 81px; }
.c-std { width: 72px; }

.grid td,
.grid th {
    height: 25px;
    padding: 0 0 2px;
    line-height: 1;
    border-right: 1px solid #d6d6d6;
    border-bottom: 1px solid #d6d6d6;
    white-space: nowrap;
    overflow: visible;
}

.grid td {
    padding: 0 2px 2px 3px;
}

.grid th {
    background: #e6e6e6;
    font-family: "Open Sans", sans-serif;
    font-size: 14px;
    font-weight: 400;
    color: #444;
    border-color: #b1b1b1;
    text-align: center;
}

.grid tr th:first-child {
    border-right-color: #9e9e9e;
}

.grid tr:not(.r-head) th:first-child {
    border-bottom-color: #c4c4c4;
}

.grid th.sel {
    background: #d2d2d2;
    color: #1e6b41;
}

.r-head th {
    height: 24px !important;
    padding-bottom: 0 !important;
    border-bottom-color: #9e9e9e !important;
    border-right-color: #c0c0c0 !important;
}

.corner svg {
    margin: 0 0 0 8px;
}

.r-1 td, .r-1 th { height: 26px !important; }
.r-2 td, .r-2 th { height: 27px !important; }

.grid td.title {
    position: relative;
    font-weight: 700;
    border-right: none;
    border-bottom-color: #111;
    color: #111;
    letter-spacing: .2px;
}

.grid td.under {
    border-bottom-color: #111;
}

.title-text {
    position: relative;
    z-index: 1;
}

.cursor {
    position: absolute;
    left: -1px;
    top: 0;
    right: -1px;
    bottom: -1px;
    border: 2px solid #217346;
}

.cursor i {
    position: absolute;
    right: -4px;
    bottom: -4px;
    width: 6px;
    height: 6px;
    background: #217346;
    border: 1px solid #fff;
}

.grid td.dbl {
    border-bottom: 3px double #111;
}

.ctr { text-align: center; }
.num { text-align: right; }

/* scroll bars */
.vscroll {
    width: 15px;
    margin: 2px 0 0 3px;
    display: flex;
    flex-direction: column;
    flex-shrink: 0;
}

.sb-btn {
    width: 15px;
    height: 15px;
    background: #fff;
    border: 1px solid #c4c4c4;
    display: flex;
    align-items: center;
    justify-content: center;
    flex-shrink: 0;
}

.v-thumb {
    height: 367px;
    margin-top: 2px;
    background: #fff;
    border: 1px solid #ababab;
    flex-shrink: 0;
}

.v-track {
    flex: 1;
    background: #d8d8d8;
}

.sheetbar {
    height: 28px;
    border-top: 1px solid #9e9e9e;
    display: flex;
    align-items: stretch;
    flex-shrink: 0;
    position: relative;
}

.nav-arrows {
    width: 100px;
    padding: 10px 0 0 27px;
    display: flex;
    gap: 24px;
}

.sheet-tab {
    width: 73px;
    margin-top: -1px;
    background: #fff;
    border: 1px solid #9e9e9e;
    border-top: 1px solid #9e9e9e;
    border-bottom: 2px solid #217346;
    font-family: "Open Sans", sans-serif;
    font-size: 13px;
    letter-spacing: .4px;
    line-height: 26px;
    text-align: center;
    color: #217346;
}

.add-sheet {
    margin: 5px 0 0 33px;
}

.grip-h {
    margin-left: 587px;
    line-height: 26px;
    width: 27px;
    text-align: left;
    padding-left: 6px;
}

.hscroll {
    margin: 6px 0 0 0;
    width: 509px;
    height: 15px;
    display: flex;
}

.h-thumb {
    width: 450px;
    background: #fff;
    border: 1px solid #ababab;
}

.h-track {
    flex: 1;
    background: #d8d8d8;
}

/* status bar */
.statusbar {
    height: 22px;
    flex: 1;
    background: #f3f2f1;
    border-top: 1px solid #d4d4d4;
    display: flex;
    align-items: center;
    padding-left: 8px;
    font-size: 12px;
    color: #555;
}

.ready {
    width: 67px;
    letter-spacing: 0;
}

.views {
    margin-left: 970px;
    display: flex;
    height: 100%;
}

.view {
    width: 40px;
    display: flex;
    align-items: center;
    justify-content: center;
}

.view.on {
    background: #c6c6c6;
}

.zoom {
    display: flex;
    align-items: center;
    margin-left: 3px;
}

.z-btn {
    font-family: "Open Sans", sans-serif;
    font-size: 16px;
    line-height: 1;
    color: #555;
    width: 13px;
    text-align: center;
}

.z-track {
    width: 100px;
    height: 1px;
    margin: 0 3px;
    background: #a6a6a6;
    position: relative;
}

.z-thumb {
    position: absolute;
    left: 47px;
    top: -5px;
    width: 5px;
    height: 11px;
    background: #777;
}

.z-val {
    margin-left: 10px;
    font-family: "Open Sans", sans-serif;
    font-size: 12.5px;
    color: #555;
}

/* red annotations */
.redbox {
    position: absolute;
    border: 7px solid #f00;
    border-radius: 5px;
    z-index: 5;
}

.box-tab {
    left: 114px;
    top: 31px;
    width: 54px;
    height: 41px;
}

.box-cmd {
    left: 351px;
    top: 101px;
    width: 34px;
    height: 36px;
    border-width: 6px 7px;
}

.box-range {
    left: 21px;
    top: 230px;
    width: 182px;
    height: 165px;
}

.mark {
    position: absolute;
    width: 34px;
    height: 34px;
    border-radius: 50%;
    border: 1.5px solid #f00;
    background: rgba(255, 255, 255, .82);
    box-shadow: 0 0 0 3px #fff, 2px 3px 7px 2px rgba(0, 0, 0, .22);
    color: #f00;
    font-family: "Roboto", "Liberation Sans", sans-serif;
    font-weight: 900;
    font-size: 29px;
    line-height: 31px;
    text-align: center;
    z-index: 6;
}

.m-1 { left: 210px; top: 294px; }
.m-2 { left: 121px; top: 78px; }
.m-3 { left: 352px; top: 141px; }
```
